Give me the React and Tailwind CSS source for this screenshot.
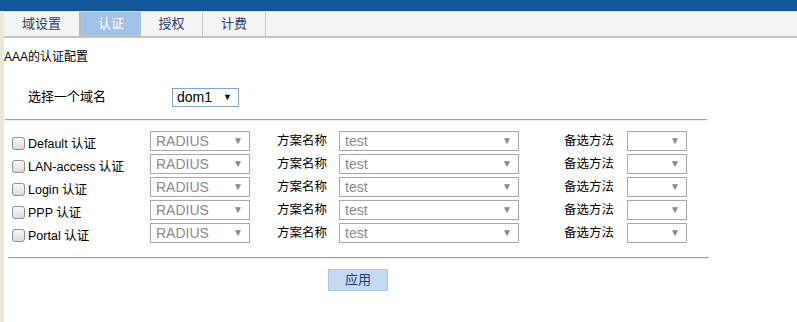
import React from "react";

const font = { fontFamily: '"Liberation Sans", Arial, "Noto Sans CJK SC", sans-serif' };

function Sel({ w, text, color = "text-[#8a8a8a]" }) {
  return (
    <div className={`h-[20px] border border-[#a9a9a9] bg-white flex items-center justify-between pl-[5px] pr-[6px] ${w}`}>
      <span className={`text-[14px] leading-none ${color}`}>{text}</span>
      <span className="text-[10px] text-[#8a8a8a] leading-none">▼</span>
    </div>
  );
}

function Check() {
  return (
    <div className="w-[13px] h-[13px] rounded-[3px] border border-[#8f8f8f] bg-gradient-to-b from-[#fafafa] to-[#dcdcdc]" />
  );
}

const rows = ["Default 认证", "LAN-access 认证", "Login 认证", "PPP 认证", "Portal 认证"];

export default function App() {
  return (
    <div className="w-[797px] h-[322px] bg-white flex flex-col overflow-hidden text-[12px] text-black" style={font}>
      <div className="h-[11px] bg-[#11579a] shrink-0" />
      <div className="flex flex-1">
        <div className="w-[4px] bg-[#ebe8d8] shrink-0" />
        <div className="flex-1 flex flex-col">
          <div className="h-[27px] bg-[#f4f4f4] border-t border-[#dcdcdc] border-b-2 border-b-[#c4c4c4] flex text-[13px] text-[#2b3b6b]">
            <div className="w-[75px] flex items-center justify-center">域设置</div>
            <div className="w-[2px] bg-[#b8b8b8]" />
            <div className="w-[60px] flex items-center justify-center bg-[#a4c1e8] text-white">认证</div>
            <div className="w-[62px] flex items-center justify-center border-r border-[#c8c8c8]">授权</div>
            <div className="w-[63px] flex items-center justify-center border-r border-[#c8c8c8]">计费</div>
          </div>
          <div className="h-[12px]" />
          <div className="h-[14px] leading-[14px] text-[12px]">AAA的认证配置</div>
          <div className="h-[24px]" />
          <div className="flex items-center h-[18px]">
            <div className="w-[168px] pl-[24px] text-[13px]">选择一个域名</div>
            <div className="w-[67px] h-[19px] border border-[#7ea6d8] flex items-center justify-between pl-[4px] pr-[6px]">
              <span className="text-[14px] leading-none">dom1</span>
              <span className="text-[9px] leading-none">▼</span>
            </div>
          </div>
          <div className="h-[13px]" />
          <div className="ml-[1px] w-[702px] h-[2px] border-t border-[#a0a0a0] border-b border-b-[#ececec]" />
          <div className="h-[10px]" />
          <div className="flex flex-col gap-[3px]">
            {rows.map((r) => (
              <div key={r} className="flex items-center h-[20px]">
                <div className="w-[8px]" />
                <div className="pt-[4px]"><Check /></div>
                <div className="w-[125px] pl-[3px] pt-[6px] text-[12.5px] leading-none">{r}</div>
                <Sel w="w-[100px]" text="RADIUS" />
                <div className="w-[62px] ml-[27px] text-[12.5px]">方案名称</div>
                <Sel w="w-[180px]" text="test" />
                <div className="w-[63px] ml-[45px] text-[12.5px]">备选方法</div>
                <Sel w="w-[60px]" text="" />
              </div>
            ))}
          </div>
          <div className="h-[14px]" />
          <div className="ml-[4px] w-[701px] h-[2px] border-t border-[#a0a0a0] border-b border-b-[#ececec]" />
          <div className="h-[10px]" />
          <div className="ml-[324px] w-[60px] h-[22px] bg-[#c7daf5] border border-[#a9c4ec] flex items-center justify-center text-[13px] text-[#223a7a]">
            应用
          </div>
        </div>
      </div>
    </div>
  );
}
